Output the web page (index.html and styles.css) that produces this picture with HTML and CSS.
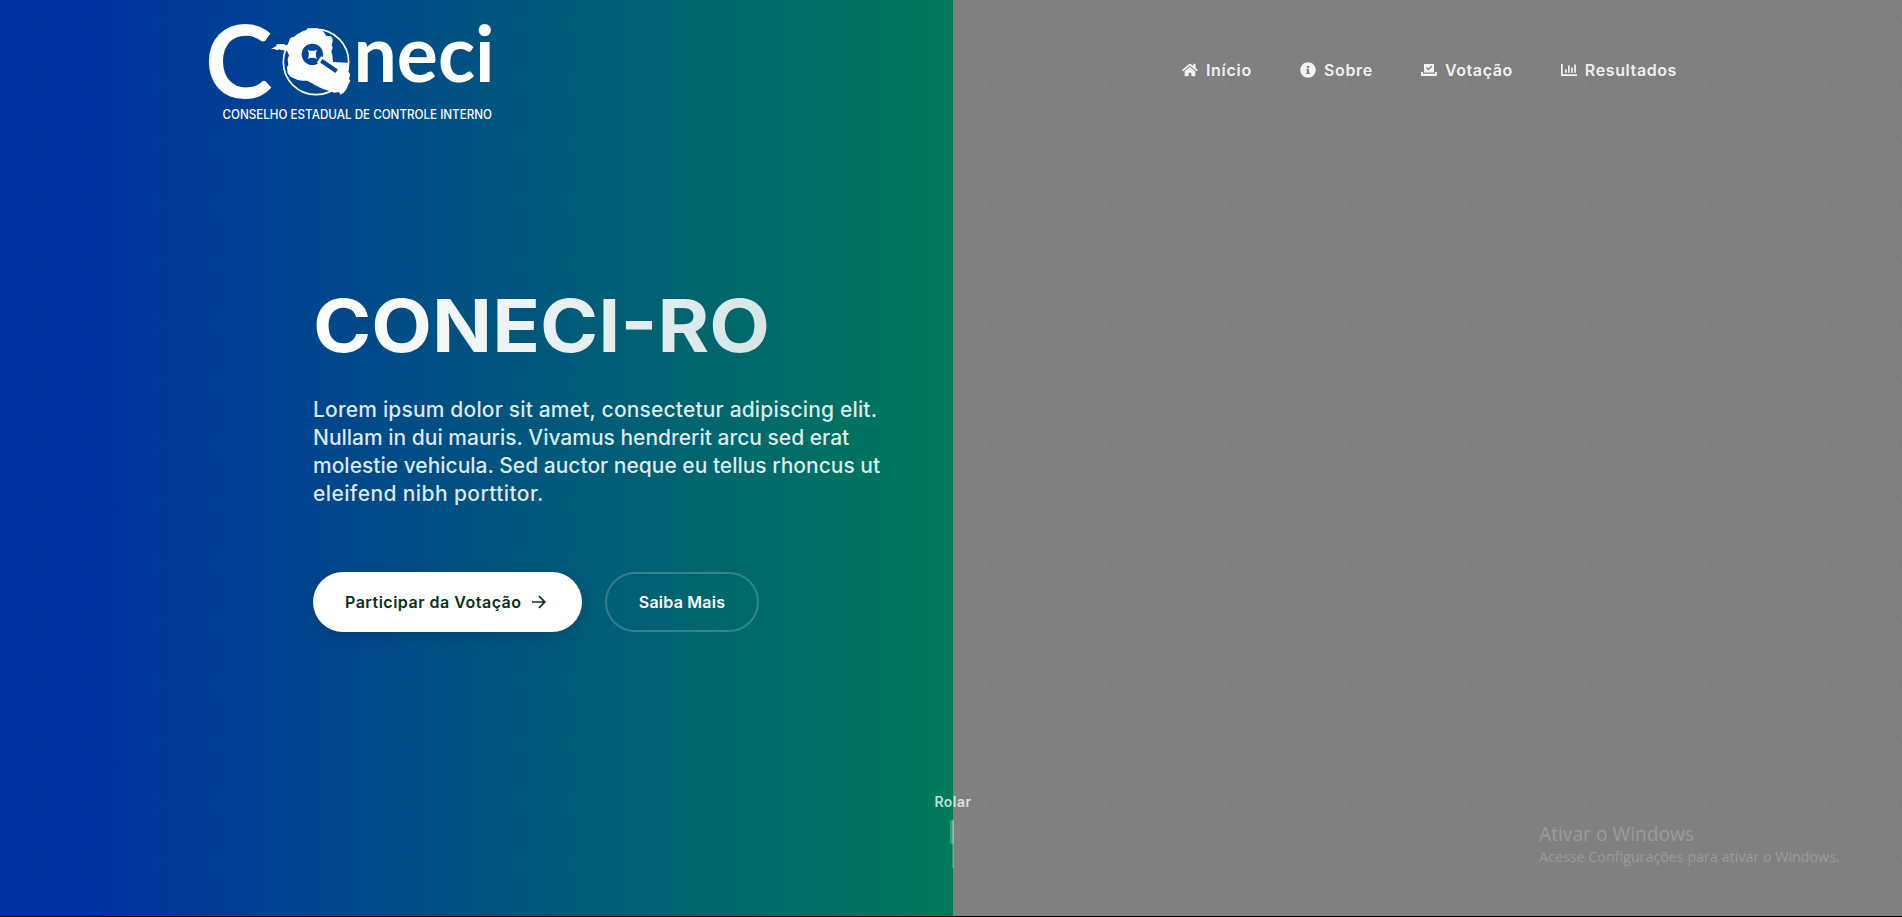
FILE: index.html
```html
<!DOCTYPE html>
<html lang="pt-BR">
<head>
<meta charset="utf-8">
<title>CONECI-RO</title>
<link rel="stylesheet" href="styles.css">
</head>
<body>
<div class="page">
  <svg class="rings" aria-hidden="true">
    <defs>
      <pattern id="ring" width="60" height="60" patternUnits="userSpaceOnUse">
        <circle cx="36" cy="23" r="5.8" fill="none" stroke="#00745a" stroke-opacity=".06" stroke-width="1.5"/>
      </pattern>
    </defs>
    <rect width="100%" height="100%" fill="url(#ring)"/>
  </svg>
  <header class="header">
    <a class="brand" href="#">
      <svg class="logo" viewBox="199 4 310 126" fill="#fff">
        <text class="logo-big" x="205" y="98" textLength="67.500" lengthAdjust="spacingAndGlyphs">C</text>
        <text class="logo-small" x="353.500" y="82" textLength="141" lengthAdjust="spacingAndGlyphs">neci</text>
        <g transform="translate(265 18) scale(.33333)">
          <circle cx="153" cy="132" r="98" fill="none" stroke="#fff" stroke-width="5"/>
          <path d="M18 92L28 88 34 84 35 79 58 78 62 82 70 80 72 70 75 62 80 58 92 56 100 50 108 44 122 42 124 36 128 31 158 31 162 36 172 38 178 44 184 54 196 54 202 60 203 72 200 80 203 90 199 100 202 112 204 132 250 134 252 148 250 160 256 170 252 182 256 188 250 200 244 214 236 224 226 230 222 222 208 224 196 220 184 216 172 212 160 206 148 200 138 194 126 188 112 188 98 186 90 182 76 176 68 166 66 148 70 140 68 124 72 112 66 98 50 96 42 94 36 97 30 94Z"/>
          <circle cx="142" cy="109" r="32" fill="#004693"/>
          <path d="M128 95q14 7 28 0q-7 14 0 28q-14-7-28 0q7-14 0-28z"/>
          <path d="M162 124L220 163" stroke="#fff" stroke-width="22"/>
          <path d="M169 128L215 160" stroke="#00498d" stroke-width="13"/>
        </g>
        <text class="logo-sub" x="222.500" y="118.700" textLength="269.500" lengthAdjust="spacingAndGlyphs">CONSELHO ESTADUAL DE CONTROLE INTERNO</text>
      </svg>
    </a>
    <nav class="nav">
      <a class="home" href="#"><svg viewBox="0 0 576 512"><path d="M280.400 148.300L96 300.100V464a16 16 0 0 0 16 16l112.100-.3a16 16 0 0 0 15.900-16V368a16 16 0 0 1 16-16h64a16 16 0 0 1 16 16v95.600a16 16 0 0 0 16 16.100L464 480a16 16 0 0 0 16-16V300L295.700 148.300a12.200 12.200 0 0 0-15.300 0zM571.600 251.500L488 182.600V44.100a12 12 0 0 0-12-12h-56a12 12 0 0 0-12 12v72.600L318.500 43a48 48 0 0 0-61 0L4.300 251.500a12 12 0 0 0-1.600 16.900l25.500 31a12 12 0 0 0 16.900 1.600l235.300-193.700a12.200 12.200 0 0 1 15.300 0L530.900 301a12 12 0 0 0 16.900-1.600l25.500-31a12 12 0 0 0-1.700-16.900z"/></svg><span>Início</span></a>
      <a class="about" href="#"><svg viewBox="0 0 512 512"><path d="M256 8C119 8 8 119.100 8 256s111 248 248 248 248-111 248-248S393 8 256 8zm0 110a42 42 0 1 1 0 84 42 42 0 0 1 0-84zm56 254a12 12 0 0 1-12 12h-88a12 12 0 0 1-12-12v-24a12 12 0 0 1 12-12h12v-64h-12a12 12 0 0 1-12-12v-24a12 12 0 0 1 12-12h64a12 12 0 0 1 12 12v100h12a12 12 0 0 1 12 12z"/></svg><span>Sobre</span></a>
      <a class="vote" href="#"><svg viewBox="0 0 16 16"><path fill-rule="evenodd" d="M3 2h10v8.500H3zM7.400 8.500l4-4.100-1-1L7.400 6.500 6 5.100l-1 1zM0 10h2v1.700h12V10h2v4H0z"/></svg><span>Votação</span></a>
      <a class="results" href="#"><svg viewBox="0 0 16 16"><path d="M0 2h1.700v10.300H16V14H0zM4 7.500h1.700v3.300H4zM7 3.500h1.700v7.300H7zM10.200 5.500h1.700v5.300h-1.700zM13.200 2.500h1.700v8.300h-1.700z"/></svg><span>Resultados</span></a>
    </nav>
  </header>
  <main class="hero">
    <h1><span>CONECI-RO</span></h1>
    <p class="lead"><span class="line-a">Lorem ipsum dolor sit amet, consectetur adipiscing elit.</span><br>Nullam in dui mauris. Vivamus hendrerit arcu sed erat<br>molestie vehicula. Sed auctor neque eu tellus rhoncus ut<br><span class="line-d">eleifend nibh porttitor.</span></p>
    <div class="actions">
      <a class="btn primary" href="#"><span>Participar da Votação</span><svg viewBox="0 0 16 16"><path d="M1 8h12.500M8 2.200L13.800 8 8 13.800"/></svg></a>
      <a class="btn ghost" href="#">Saiba Mais</a>
    </div>
  </main>
  <div class="scroll">Rolar<i><b></b></i></div>
  <div class="notice">Ativar o Windows<small>Acesse Configurações para ativar o Windows.</small></div>
</div>
</body>
</html>
```
FILE: styles.css
```css
* { box-sizing: border-box; }
body { margin: 0; font-family: Inter, "Open Sans", sans-serif; }
a { text-decoration: none; }
.page {
  position: relative;
  height: 917px;
  overflow: hidden;
  border-bottom: 1px solid #000;
  background: linear-gradient(90deg, #0033a0 0, #0033a0 95px, #007a5a 953px, #808080 953px);
}
.rings { position: absolute; inset: 0; width: 100%; height: 100%; }
.header {
  position: relative;
  display: flex;
  justify-content: space-between;
  padding: 4px 225px 0 199px;
  height: 141px;
}
.logo { display: block; width: 310px; height: 126px; }
.logo-big, .logo-small { font-family: Lato, sans-serif; font-weight: 700; }
.logo-big { font-size: 101px; }
.logo-small { font-size: 79px; }
.logo-sub { font-size: 12.5px; font-weight: 500; }
.nav { display: flex; gap: 48px; height: 132px; align-items: center; }
.nav a {
  display: flex;
  align-items: center;
  gap: 8px;
  color: rgba(255, 255, 255, .9);
  font-size: 16px;
  font-weight: 600;
}
.nav svg { width: 16px; height: 16px; fill: currentColor; }
.home { letter-spacing: .72px; }
.about { letter-spacing: .68px; }
.vote, .results { letter-spacing: .6px; }
.hero { position: relative; padding: 141px 0 0 313px; }
h1 { margin: 0; font-size: 73px; line-height: 88px; font-weight: 700; }
h1 span {
  display: inline-block;
  transform: scaleX(1.08);
  transform-origin: left;
  background: linear-gradient(90deg, #fff 0, rgba(255, 255, 255, .84) 100%);
  background-clip: text;
  -webkit-background-clip: text;
  color: transparent;
}
.lead { margin: 26px 0 64px; color: rgba(255, 255, 255, .88); font-size: 21px; line-height: 28px; font-weight: 500; }
.line-a { letter-spacing: .17px; }
.line-d { letter-spacing: .4px; }
.actions { display: flex; gap: 23px; }
.btn { display: flex; align-items: center; height: 60px; border-radius: 30px; font-size: 16px; font-weight: 600; }
.primary { width: 269px; padding-left: 32px; gap: 9px; letter-spacing: .5px; background: #fff; color: #0a3018; box-shadow: 0 4px 15px rgba(0, 0, 0, .15); }
.primary svg { width: 16px; height: 16px; fill: none; stroke: currentColor; stroke-width: 1.7; }
.ghost { width: 154px; justify-content: center; letter-spacing: .25px; border: 2px solid rgba(255, 255, 255, .2); color: #fff; }
.scroll {
  position: absolute;
  left: 913px;
  top: 791px;
  width: 80px;
  display: flex;
  flex-direction: column;
  align-items: center;
  gap: 8px;
  color: rgba(255, 255, 255, .75);
  font-size: 14px;
  line-height: 21px;
  font-weight: 600;
  letter-spacing: .5px;
}
.scroll i { display: block; width: 2px; height: 48px; background: rgba(255, 255, 255, .2); }
.scroll b { display: block; width: 4px; height: 24px; margin-left: -2px; border-radius: 2px; background: rgba(255, 255, 255, .25); }
.notice { position: absolute; left: 1539px; top: 820px; font-family: "Open Sans", sans-serif; color: #9b9b9b; font-size: 19.2px; line-height: 27px; }
.notice small { display: block; font-size: 14.3px; line-height: 19px; }
```
